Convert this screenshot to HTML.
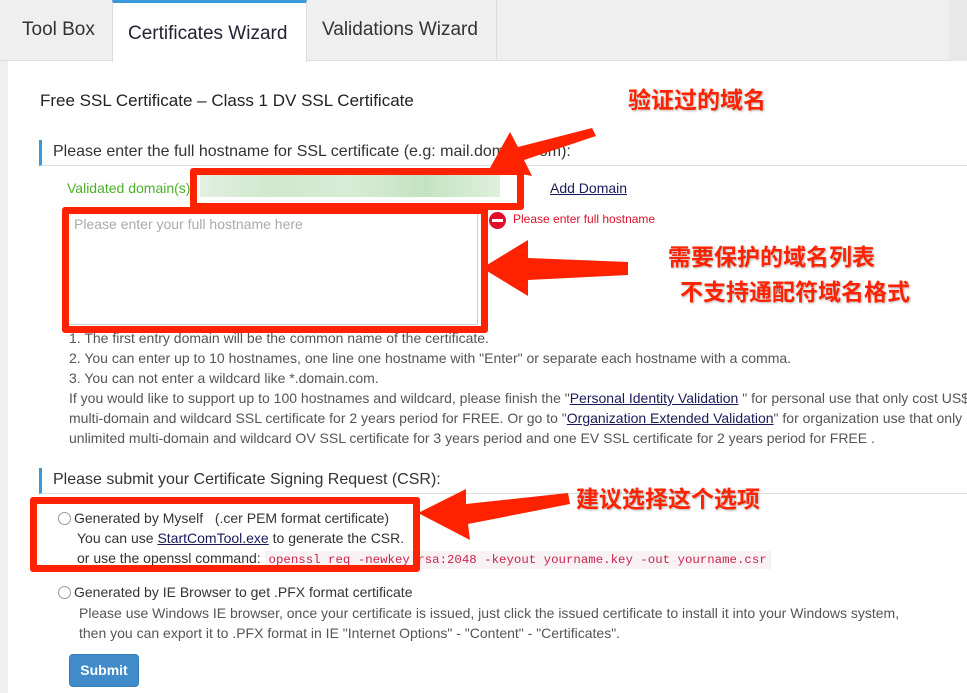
<!DOCTYPE html>
<html><head><meta charset="utf-8"><style>
*{margin:0;padding:0;box-sizing:border-box}
body{width:967px;height:693px;overflow:hidden;background:#fff;font-family:"Liberation Sans","Noto Sans CJK SC",sans-serif;color:#333;position:relative}
.tabs{position:absolute;left:0;top:0;width:967px;height:61px;background:#efefef;border-bottom:1px solid #ddd}
.tab{position:absolute;top:0;height:61px;font-size:19px;color:#333;line-height:60px}
.abs{position:absolute;white-space:nowrap}
.sec{position:absolute;left:39px;height:26px;border-left:3px solid #3a9ad9;font-size:16px;padding-left:11px;line-height:24px;color:#333;border-bottom:1px solid #ddd;width:940px}
.note{font-size:14px;color:#555;line-height:20px}
a{color:#1a1a5a;text-decoration:underline}
.rbox{position:absolute;border:7px solid #ff2200;border-radius:3px}
.cn{position:absolute;color:#ff2200;font-size:23px;font-weight:bold;font-family:"Noto Sans CJK SC",sans-serif;text-shadow:1px 1px 2px rgba(0,0,0,.3);white-space:nowrap}
.radio{display:inline-block;width:13px;height:13px;border:1px solid #999;border-radius:50%;vertical-align:-2px;margin-right:3px}
code{font-family:"Liberation Mono",monospace;color:#c7254e;background:#f9f2f4;font-size:12.4px;padding:2px 4px}
</style></head><body>
<div class="tabs">
<div class="tab" style="left:22px">Tool Box</div>
<div class="tab" style="left:112px;width:195px;background:#fff;border-top:3px solid #3a9ad9;border-left:1px solid #ddd;border-right:1px solid #ddd;padding-left:15px;line-height:62px;height:62px;color:#223">Certificates Wizard</div>
<div class="tab" style="left:307px;width:190px;border-right:1px solid #ddd;padding-left:15px">Validations Wizard</div>
<div class="tab" style="left:950px;width:17px;background:#e8e8e8"></div>
</div>
<div class="abs" style="left:0;top:61px;width:8px;height:632px;background:#efefef"></div>
<div class="abs" style="left:40px;top:91px;font-size:17px;color:#222">Free SSL Certificate – Class 1 DV SSL Certificate</div>
<div class="sec" style="top:140px">Please enter the full hostname for SSL certificate (e.g: mail.domain.com):</div>
<div class="abs" style="left:67px;top:180px;font-size:14px;color:#4caf2a">Validated domain(s)</div>
<div class="abs" style="left:200px;top:175px;width:300px;height:22px;background:linear-gradient(90deg,#e2f0e0,#cfe8cc,#d8ecd5,#c3e3c0,#dff0dc)"></div>
<div class="abs" style="left:550px;top:180px;font-size:14px"><a>Add Domain</a></div>
<div class="abs" style="left:68px;top:212px;width:410px;height:113px;border:1px solid #ccc;font-size:14px;color:#aaa;padding:3px 5px">Please enter your full hostname here</div>
<div class="abs" style="left:489px;top:212px;width:17px;height:17px;border-radius:50%;background:#e0102a"><div style="margin:7px 3px;height:3px;background:#fff"></div></div>
<div class="abs" style="left:513px;top:212px;font-size:12px;color:#e0102a">Please enter full hostname</div>
<div class="abs note" style="left:69px;top:328px">1. The first entry domain will be the common name of the certificate.<br>2. You can enter up to 10 hostnames, one line one hostname with "Enter" or separate each hostname with a comma.<br>3. You can not enter a wildcard like *.domain.com.<br>If you would like to support up to 100 hostnames and wildcard, please finish the "<a>Personal Identity Validation</a> " for personal use that only cost US$<br>multi-domain and wildcard SSL certificate for 2 years period for FREE. Or go to "<a>Organization Extended Validation</a>" for organization use that only<br>unlimited multi-domain and wildcard OV SSL certificate for 3 years period and one EV SSL certificate for 2 years period for FREE .</div>
<div class="sec" style="top:468px">Please submit your Certificate Signing Request (CSR):</div>
<div class="abs" style="left:58px;top:508px;font-size:14px;line-height:20px;color:#333"><span class="radio"></span>Generated by Myself &nbsp; (.cer PEM format certificate)<br><span style="padding-left:19px">You can use <a>StartComTool.exe</a> to generate the CSR.</span><br><span style="padding-left:19px">or use the openssl command: <code>openssl req -newkey rsa:2048 -keyout yourname.key -out yourname.csr</code></span></div>
<div class="abs" style="left:58px;top:584px;font-size:14px;color:#333"><span class="radio"></span>Generated by IE Browser to get .PFX format certificate</div>
<div class="abs note" style="left:79px;top:603px">Please use Windows IE browser, once your certificate is issued, just click the issued certificate to install it into your Windows system,<br>then you can export it to .PFX format in IE "Internet Options" - "Content" - "Certificates".</div>
<div class="abs" style="left:69px;top:654px;width:70px;height:33px;background:#428bca;border:1px solid #357ebd;border-radius:4px;color:#fff;font-size:14px;font-weight:bold;text-align:center;line-height:31px">Submit</div>
<div class="rbox" style="left:190px;top:168px;width:334px;height:42px"></div>
<div class="rbox" style="left:62px;top:207px;width:426px;height:126px"></div>
<div class="rbox" style="left:30px;top:497px;width:390px;height:75px"></div>
<div class="cn" style="left:628px;top:81px">验证过的域名</div>
<div class="cn" style="left:668px;top:238px">需要保护的域名列表</div>
<div class="cn" style="left:680px;top:273px">不支持通配符域名格式</div>
<div class="cn" style="left:576px;top:480px">建议选择这个选项</div>
<svg class="abs" style="left:0;top:0" width="967" height="693">
<polygon fill="#ff2200" points="490,168 510,132 518,147 592,128 596,136 524,160 532,176"/>
<polygon fill="#ff2200" points="482,268 528,240 528,258 628,262 628,275 528,280 528,296"/>
<polygon fill="#ff2200" points="418,513 466,489 466,504 568,493 570,504 468,524 470,540"/>
</svg>
</body></html>
